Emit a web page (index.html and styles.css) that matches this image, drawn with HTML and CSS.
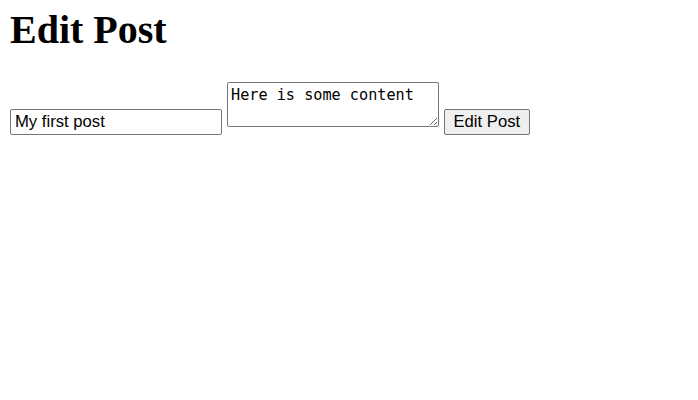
FILE: index.html
```html
<!DOCTYPE html>
<html>
<head>
<meta charset="utf-8">
<link rel="stylesheet" href="styles.css">
</head>
<body>
<h1 class="title">Edit Post</h1>
<form class="form">
<input class="field" type="text" value="My first post">
<textarea class="area">Here is some content</textarea>
<button class="btn" type="button">Edit Post</button>
</form>
</body>
</html>
```

FILE: styles.css
```css
body {
  margin: 0;
  padding: 0 10px;
  font-family: "Liberation Serif", serif;
  color: #000;
  background: #fff;
}
.title {
  font-family: "Liberation Serif", serif;
  font-size: 40px;
  font-weight: bold;
  line-height: 46px;
  margin: 7px 0 29px;
}
.form {
  display: flex;
  align-items: flex-end;
  gap: 5px;
  margin: 0;
}
.field {
  box-sizing: border-box;
  width: 212px;
  height: 26px;
  margin: 0;
  padding: 0 4px;
  border: 1px solid #767676;
  border-radius: 2px;
  font-family: "Liberation Sans", Arial, sans-serif;
  font-size: 16.67px;
  color: #000;
  background: #fff;
}
.area {
  box-sizing: border-box;
  width: 212px;
  height: 45px;
  margin: 0 0 8px;
  padding: 3.5px 3px 2px;
  border: 1px solid #767676;
  border-radius: 2px;
  font-family: "DejaVu Sans Mono", monospace;
  font-size: 15.2px;
  line-height: 17px;
  color: #000;
  background: #fff;
}
.btn {
  box-sizing: border-box;
  height: 26px;
  margin: 0;
  padding: 0 8.5px;
  border: 1px solid #767676;
  border-radius: 2px;
  background: #efefef;
  font-family: "Liberation Sans", Arial, sans-serif;
  font-size: 16.67px;
  color: #000;
}
```
